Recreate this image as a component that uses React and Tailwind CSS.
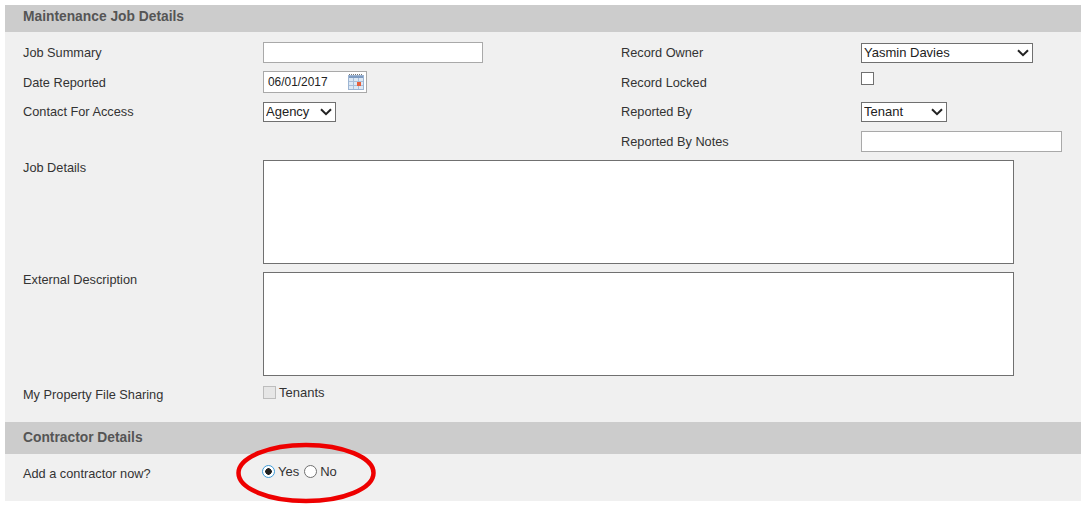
import React from 'react';

const Label = ({ children, className = '' }) => (
    <div className={`text-[#333] ${className}`}>{children}</div>
);

const Chevron = () => (
    <svg className="absolute top-1/2 -translate-y-1/2 right-[4px]" width="12" height="8" viewBox="0 0 12 8" fill="none">
        <path d="M1 1.2L6 6.2L11 1.2" stroke="#222" strokeWidth="2" />
    </svg>
);

const Select = ({ value, className }) => (
    <div className={`relative h-[20px] ${className}`}>
        <select
            defaultValue={value}
            className="w-full h-full appearance-none bg-white border border-[#707070] pl-[2px] text-[13px] text-[#222] outline-none"
        >
            <option>{value}</option>
        </select>
        <Chevron />
    </div>
);

const TextBox = ({ className }) => (
    <input type="text" className={`bg-white border border-[#a9a9a9] outline-none ${className}`} />
);

const CalendarIcon = () => (
    <svg className="absolute right-[2px] top-[1px]" width="16" height="17" viewBox="0 0 16 17">
        <path d="M1 1.5H15" stroke="#777" strokeDasharray="1 1" />
        <rect x="0.5" y="2.5" width="15" height="14" fill="#dce8f5" stroke="#9db5d3" />
        <rect x="1" y="3" width="14" height="2" fill="#7f9cc2" />
        <path d="M5.5 5V16M10.5 5V16M1 8.5H15M1 12.5H15" stroke="#a9bfd9" />
        <rect x="9" y="9" width="4" height="4" fill="#e8603c" />
    </svg>
);

const SectionHeader = ({ children, className }) => (
    <div className={`bg-[#cccccc] pl-[18px] flex items-center font-bold text-[13.8px] text-[#555] ${className}`}>{children}</div>
);

const App = () => {
    return (
        <div className="relative w-[1085px] h-[508px] bg-white pt-[5px] pl-[5px] overflow-hidden text-[12.75px] leading-[15px] font-['Liberation_Sans',Arial,sans-serif]">
            <div className="w-[1076px] h-[496px] bg-[#f0f0f0] flex flex-col">
                <SectionHeader className="h-[27px] pb-[5px]">Maintenance Job Details</SectionHeader>

                <div className="grid grid-cols-[240px_358px_240px_1fr] pl-[18px] pt-[6px] items-center auto-rows-[29.5px]">
                    <Label>Job Summary</Label>
                    <div><TextBox className="block w-[220px] h-[21px]" /></div>
                    <Label>Record Owner</Label>
                    <Select value="Yasmin Davies" className="w-[172px]" />

                    <Label>Date Reported</Label>
                    <div className="relative w-[104px] h-[22px] bg-white border border-[#a9a9a9] flex items-center pl-[4px] pt-[1px] text-[11.9px] text-[#222]">
                        06/01/2017
                        <CalendarIcon />
                    </div>
                    <Label>Record Locked</Label>
                    <div className="h-[20px]">
                        <input type="checkbox" className="block appearance-none w-[13px] h-[13px] bg-white border border-[#707070]" />
                    </div>

                    <Label>Contact For Access</Label>
                    <Select value="Agency" className="w-[73px]" />
                    <Label>Reported By</Label>
                    <Select value="Tenant" className="w-[86px]" />

                    <div />
                    <div />
                    <Label>Reported By Notes</Label>
                    <TextBox className="block w-[201px] h-[21px]" />
                </div>

                <div className="grid grid-cols-[240px_1fr] pl-[18px] pt-[4px] gap-y-[8px]">
                    <Label>Job Details</Label>
                    <textarea className="block w-[751px] h-[104px] bg-white border border-[#707070] outline-none resize-none" />
                    <Label>External Description</Label>
                    <textarea className="block w-[751px] h-[104px] bg-white border border-[#707070] outline-none resize-none" />
                </div>

                <div className="grid grid-cols-[240px_1fr] pl-[18px] pt-[9px]">
                    <Label className="pt-[2px]">My Property File Sharing</Label>
                    <div className="flex items-center gap-[3px] text-[13px] text-[#333] h-[14px]">
                        <input type="checkbox" disabled className="block appearance-none w-[13px] h-[13px] bg-[#e6e6e6] border border-[#bdbdbd]" />
                        Tenants
                    </div>
                </div>

                <SectionHeader className="h-[32px] mt-[20px] pb-[2px]">Contractor Details</SectionHeader>

                <div className="grid grid-cols-[240px_1fr] pl-[18px] pt-[10px]">
                    <Label className="pt-[2px]">Add a contractor now?</Label>
                    <div className="flex items-center text-[13px] text-[#333] h-[14px] -ml-[1px]">
                        <input
                            type="radio"
                            name="contractor"
                            defaultChecked
                            className="block appearance-none w-[13px] h-[13px] rounded-full border border-[#3d9bd9] bg-[radial-gradient(circle,#222_3px,#fff_3.5px)]"
                        />
                        <span className="ml-[3px]">Yes</span>
                        <input
                            type="radio"
                            name="contractor"
                            className="block appearance-none w-[13px] h-[13px] ml-[5px] rounded-full bg-white border border-[#707070]"
                        />
                        <span className="ml-[3px]">No</span>
                    </div>
                </div>
            </div>

            {/* red annotation circled over the radios */}
            <svg className="absolute left-[235px] top-[441px]" width="142" height="64" viewBox="0 0 142 64" fill="none">
                <ellipse cx="71" cy="32" rx="67.5" ry="28" stroke="#ee0000" strokeWidth="4.5" />
            </svg>
        </div>
    );
};

export default App;
